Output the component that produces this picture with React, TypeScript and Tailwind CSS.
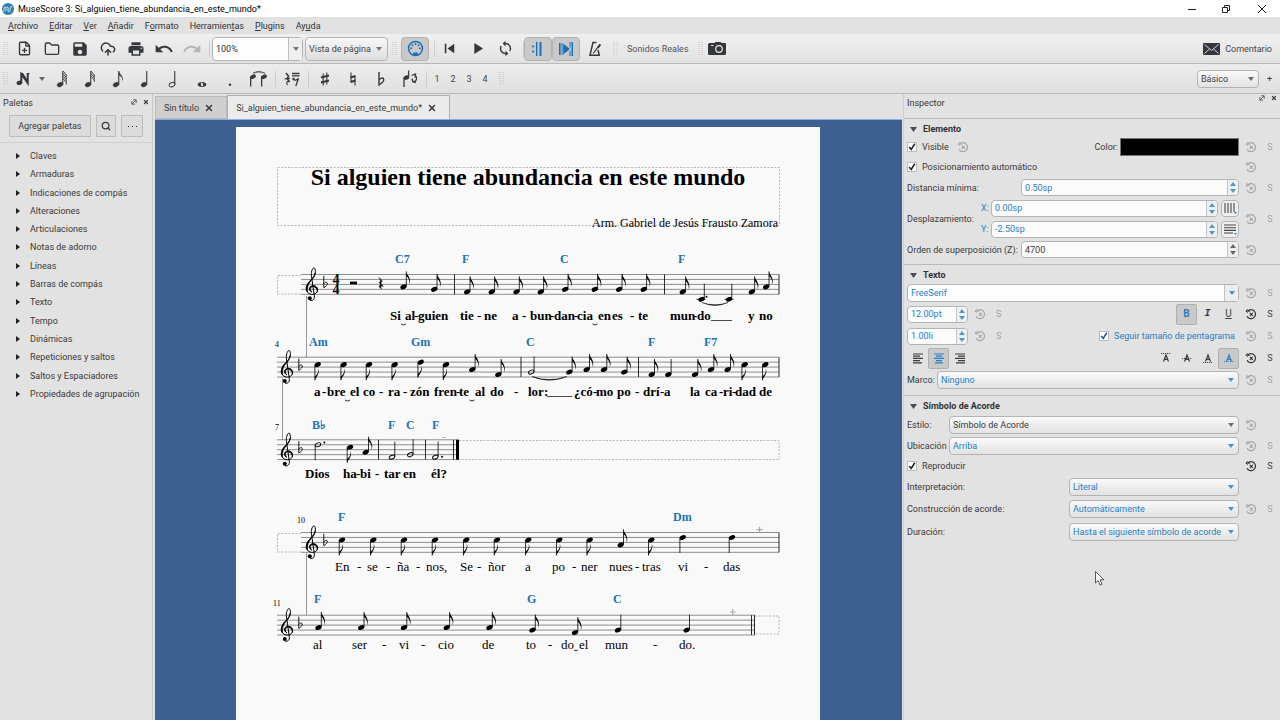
import React from "react";
import { MdLoop, MdPlayArrow, MdPrint, MdRedo, MdSave, MdSkipPrevious, MdUndo } from "react-icons/md";
import { CloudUpload, FilePlus, Folder, Search, X } from "lucide-react";

/* ---------- shared bits ---------- */

const Arrow = ({ className = "" }: { className?: string }) => (
  <svg viewBox="0 0 6 4" className={`h-1 w-1.5 shrink-0 ${className}`} fill="currentColor" aria-hidden="true">
    <path d="M0 0h6L3 4z" />
  </svg>
);

const Grip = () => (
  <svg viewBox="0 0 5 14" className="h-3.5 w-[5px] shrink-0 text-[#c2c2c2]" aria-hidden="true">
    <path d="M1 0v14M4 0v14" stroke="currentColor" strokeDasharray="1 1" />
  </svg>
);

const Sep = () => <span className="h-4 w-px shrink-0 bg-[#cdcdcd]" />;

function Tool({ label, on, className = "w-7", children }: { label: string; on?: boolean; className?: string; children: React.ReactNode }) {
  return (
    <button
      type="button"
      aria-label={label}
      className={`flex h-6 shrink-0 items-center justify-center rounded-sm ${on ? "border border-[#b2b2b2] bg-[#c9c9c9] text-[#1a70b8]" : "text-[#34373b]"} ${className}`}
    >
      {children}
    </button>
  );
}

function Select({ label, id, value, blue, editable, className = "" }: { label: string; id?: string; value: string; blue?: boolean; editable?: boolean; className?: string }) {
  return (
    <span className={`relative flex min-w-0 ${className}`}>
      <select
        id={id}
        aria-label={label}
        defaultValue={value}
        className={`h-[18px] w-full appearance-none rounded-sm border border-[#b4b4b4] pr-3 pl-[3px] leading-4 ${editable ? "bg-[#fdfdfd]" : "bg-linear-to-b from-[#fafafa] to-[#e2e2e2]"} ${blue ? "text-[#2480c4]" : "text-[#3a3a3a]"}`}
      >
        <option>{value}</option>
      </select>
      <span className={`pointer-events-none absolute inset-y-px right-px flex w-3.5 items-center justify-center ${editable ? "border-l border-[#c0c0c0] bg-[#eeeeee]" : ""}`}>
        <Arrow className={blue ? "text-[#3f93cf]" : "text-[#6b6b6b]"} />
      </span>
    </span>
  );
}

function Spin({ label, id, value, dark, className = "" }: { label: string; id?: string; value: string; dark?: boolean; className?: string }) {
  return (
    <span className={`flex h-[17px] min-w-0 overflow-hidden rounded-sm border border-[#b4b4b4] bg-[#fbfbfb] ${className}`}>
      <input id={id} aria-label={label} defaultValue={value} className={`w-full min-w-0 flex-1 pl-[3px] ${dark ? "text-[#3a3a3a]" : "text-[#2480c4]"}`} />
      <span className={`flex w-[11px] flex-col items-center justify-center border-l border-[#c4c4c4] bg-[#f0f0f0] ${dark ? "text-[#666]" : "text-[#4b98d0]"}`}>
        <button type="button" aria-label={`${label} +`} className="flex h-[7px] items-center">
          <Arrow className="rotate-180" />
        </button>
        <button type="button" aria-label={`${label} -`} className="flex h-[7px] items-center">
          <Arrow />
        </button>
      </span>
    </span>
  );
}

function Check({ label, blue }: { label: string; blue?: boolean }) {
  return (
    <label className={`flex items-center gap-[5px] ${blue ? "text-[#2480c4]" : ""}`}>
      <span className="relative flex size-2.5">
        <input type="checkbox" defaultChecked className="size-2.5 appearance-none border border-[#bdbdbd] bg-white" />
        <svg viewBox="0 0 10 10" className={`pointer-events-none absolute inset-0 ${blue ? "text-[#1a5f9c]" : "text-[#222]"}`} fill="none" stroke="currentColor" strokeWidth="1.6">
          <path d="M2.2 5l2 2.4L7.8 1.8" />
        </svg>
      </span>
      {label}
    </label>
  );
}

function Reset({ dark }: { dark?: boolean }) {
  return (
    <button type="button" aria-label="Restablecer" className={`flex justify-center ${dark ? "text-[#2e2e2e]" : "text-[#a3a3a3]"}`}>
      <svg viewBox="0 0 12 12" className="size-3" fill="none" stroke="currentColor" strokeWidth="1.1">
        <path d="M2.6 3.2A4.5 4.5 0 1 1 2 8.2" />
        <path d="M4.8 4.8l3 3M7.8 4.8l-3 3" />
        <path d="M1 3.2h4.2M2.6 1.2L1 3.2l1.6 1.6" strokeWidth="0.9" />
      </svg>
    </button>
  );
}

function SetStyle({ dark }: { dark?: boolean }) {
  return (
    <button type="button" aria-label="Fijar como estilo" className={`text-center ${dark ? "text-[#444]" : "text-[#a3a3a3]"}`}>
      S
    </button>
  );
}

type RowProps = { h?: string; reset?: boolean | "dark"; s?: boolean | "dark"; children: React.ReactNode };
function Row({ h = "h-[21px]", reset, s, children }: RowProps) {
  return (
    <div className={`grid grid-cols-[1fr_24px_14px] items-center pr-[3px] ${h}`}>
      <div className="flex min-w-0 items-center pl-[3px]">{children}</div>
      {reset ? <Reset dark={reset === "dark"} /> : <span />}
      {s ? <SetStyle dark={s === "dark"} /> : <span />}
    </div>
  );
}

const Section = ({ title, children }: { title: string; children: React.ReactNode }) => (
  <section className="border-t border-[#b9b9b9] pb-1">
    <h3 className="flex h-[18px] items-center gap-1.5 pt-0.5 pl-1.5 font-bold text-[#333]">
      <svg viewBox="0 0 7 5" className="h-[5px] w-[7px]" fill="#4a4a4a">
        <path d="M0 0h7L3.5 5z" />
      </svg>
      {title}
    </h3>
    {children}
  </section>
);

const DockButtons = () => (
  <span className="flex gap-1.5 pb-0.5 text-[#444]">
    <button type="button" aria-label="Desacoplar">
      <svg viewBox="0 0 6 6" className="size-1.5" fill="none" stroke="currentColor" strokeWidth="0.8">
        <path d="M2 .8h3.2V4M.8 2v3.2H4M5 1L1 5" />
      </svg>
    </button>
    <button type="button" aria-label="Cerrar panel">
      <X className="size-1.5" strokeWidth={5} />
    </button>
  </span>
);

/* ---------- toolbars ---------- */

function TitleBar() {
  return (
    <header className="flex h-[17px] items-center bg-white pl-0.5 text-black">
      <svg viewBox="0 0 12 12" className="mr-1 size-3">
        <circle cx="6" cy="6" r="6" fill="#2a7fb0" />
        <path d="M2 8.6V5.2c0-1.6 2-1.6 2 0v3M4 5.2c0-1.6 2.1-1.6 2.1 0v3.2c0 .8 2 .6 2-.6V4.4c0-1.3 2-1.1 1.9.1" fill="none" stroke="#dff0f8" strokeWidth="0.9" />
      </svg>
      <span>MuseScore 3: Si_alguien_tiene_abundancia_en_este_mundo*</span>
      <span className="ml-auto flex">
        <button type="button" aria-label="Minimizar" className="flex w-[35px] justify-center">
          <svg viewBox="0 0 8 8" className="size-2" stroke="#222"><path d="M0 4.5h8" /></svg>
        </button>
        <button type="button" aria-label="Restaurar" className="flex w-[34px] justify-center">
          <svg viewBox="0 0 8 8" className="size-2" fill="none" stroke="#222"><path d="M.5 2.5h5v5h-5zM2.5 2V.5h5v5H6" /></svg>
        </button>
        <button type="button" aria-label="Cerrar" className="flex w-[37px] justify-center">
          <svg viewBox="0 0 8 8" className="size-2" stroke="#222"><path d="M0 0l8 8M8 0L0 8" /></svg>
        </button>
      </span>
    </header>
  );
}

const menus: [string, string, string][] = [
  ["", "A", "rchivo"], ["", "E", "ditar"], ["", "V", "er"], ["", "A", "ñadir"], ["F", "o", "rmato"],
  ["Herramien", "t", "as"], ["", "P", "lugins"], ["Ay", "u", "da"],
];

const MenuBar = () => (
  <nav className="flex h-[17px] items-center gap-[11px] bg-[#e1e1e1] pl-2 text-[#333]">
    {menus.map(([a, b, c]) => (
      <button type="button" key={a + b + c}>
        {a}<u>{b}</u>{c}
      </button>
    ))}
  </nav>
);

function MainToolbar() {
  return (
    <div className="flex h-[30px] items-center border-b border-[#b8b8b8] bg-linear-to-b from-[#f0f0f0] to-[#e2e2e2] pl-[3px]">
      <Grip />
      <span className="w-0.5" />
      <Tool label="Nuevo"><FilePlus className="size-[15px]" strokeWidth={2.2} /></Tool>
      <Tool label="Abrir"><Folder className="size-4" strokeWidth={2} /></Tool>
      <Tool label="Guardar"><MdSave className="size-[18px]" /></Tool>
      <Tool label="Guardar en línea"><CloudUpload className="size-4" strokeWidth={2.2} /></Tool>
      <Tool label="Imprimir"><MdPrint className="size-[18px]" /></Tool>
      <Tool label="Deshacer"><MdUndo className="size-5" /></Tool>
      <Tool label="Rehacer"><MdRedo className="size-5 text-[#b5b5b5]" /></Tool>
      <span className="w-[3px]" />
      <Sep />
      <span className="relative ml-0.5 flex h-6 w-[91px]">
        <input aria-label="Zoom" defaultValue="100%" className="w-full rounded-sm border border-[#b4b4b4] bg-[#fdfdfd] pl-[3px] text-[#333]" />
        <button type="button" aria-label="Opciones de zoom" className="absolute inset-y-px right-px flex w-3.5 items-center justify-center border-l border-[#c0c0c0] bg-[#efefef]">
          <Arrow className="text-[#777]" />
        </button>
      </span>
      <span className="relative ml-0.5 flex h-6 w-[83px]">
        <select aria-label="Vista" className="w-full appearance-none rounded-sm border border-[#b4b4b4] bg-linear-to-b from-[#f8f8f8] to-[#dedede] pl-[3px] text-[#444]">
          <option>Vista de página</option>
        </select>
        <Arrow className="pointer-events-none absolute top-2.5 right-1.5 text-[#777]" />
      </span>
      <span className="w-1" />
      <Grip />
      <Tool label="Entrada MIDI" on className="ml-1 w-7">
        <svg viewBox="0 0 18 18" className="size-[17px]" fill="none" stroke="currentColor">
          <circle cx="9" cy="9" r="7.4" strokeWidth="1.6" />
          <g fill="currentColor" stroke="none">
            <circle cx="4.3" cy="8.7" r="1" /><circle cx="5.8" cy="5.6" r="1" /><circle cx="9" cy="4.3" r="1" />
            <circle cx="12.2" cy="5.6" r="1" /><circle cx="13.7" cy="8.7" r="1" />
            <path d="M6.5 13.2h5V16h-5z" />
          </g>
        </svg>
      </Tool>
      <span className="w-[5px]" />
      <Sep />
      <Tool label="Rebobinar"><MdSkipPrevious className="size-[19px]" /></Tool>
      <Tool label="Reproducir"><MdPlayArrow className="size-[19px]" /></Tool>
      <Tool label="Bucle"><MdLoop className="size-[17px]" /></Tool>
      <span className="w-1" />
      <Sep />
      <Tool label="Repeticiones" on>
        <svg viewBox="0 0 16 16" className="size-4" fill="currentColor">
          <circle cx="3.2" cy="5.5" r="1.1" /><circle cx="3.2" cy="10.5" r="1.1" />
          <path d="M6 1h1.4v14H6zM9.5 1h2v14h-2z" />
        </svg>
      </Tool>
      <Tool label="Desplazar partitura" on>
        <svg viewBox="0 0 16 16" className="size-4" fill="currentColor">
          <path d="M1 2h1.6v12H1zM3.6 2h.9v12h-.9zM5.2 2.5L12 8l-6.8 5.5zM11.5 1h1v5.5h-1zM11.5 10h1v5h-1zM13.5 1H15v14h-1.5z" />
        </svg>
      </Tool>
      <span className="w-px" />
      <Tool label="Metrónomo">
        <svg viewBox="0 0 16 16" className="size-4" fill="none" stroke="currentColor" strokeWidth="1.5">
          <path d="M9.5 1.6H6L3 14.2h9.2L11 9" />
          <path d="M6.2 12.5L13 3.4" strokeWidth="1.2" />
          <path d="M10 6.5l2.6-3.6 1.5 1-2.6 3.6z" fill="currentColor" stroke="none" />
        </svg>
      </Tool>
      <span className="w-1" />
      <Grip />
      <button type="button" className="mx-[9px] text-[#555]">Sonidos Reales</button>
      <Grip />
      <Tool label="Captura">
        <svg viewBox="0 0 18 13" className="h-[13px] w-[18px]">
          <path d="M1.5 1h5l1-1h5l1 1h3A1.3 1.3 0 0 1 18 2.3v9A1.5 1.5 0 0 1 16.500 13h-15A1.5 1.500 0 0 1 0 11.500v-9A1.500 1.500 0 0 1 1.500 1z" fill="currentColor" />
          <circle cx="11" cy="7" r="3.300" fill="none" stroke="#e8e8e8" strokeWidth="1.200" />
          <path d="M3 3.500h2.500" stroke="#e8e8e8" />
        </svg>
      </Tool>
      <button type="button" className="mr-2 ml-auto flex items-center gap-[5px] text-[#444]">
        <svg viewBox="0 0 17 12" className="h-3 w-[17px]">
          <rect width="17" height="12" rx="1" fill="#34373f" />
          <path d="M1.500 1.500L8.500 7.500l7-6M1.500 10.500L6.500 6M15.500 10.500L10.500 6" fill="none" stroke="#e4e4e4" strokeWidth="0.900" />
        </svg>
        Comentario
      </button>
    </div>
  );
}

function Quaver({ flags = 0, half }: { flags?: number; half?: boolean }) {
  return (
    <svg viewBox="0 0 14 18" className="h-[18px] w-3.5" fill="currentColor">
      <ellipse cx="5" cy="14.600" rx="3" ry="2.100" transform="rotate(-25 5 14.600)" fill={half ? "none" : "currentColor"} stroke="currentColor" strokeWidth={half ? 1 : 0.500} />
      <path d="M7.200 1h1.100v13.500H7.200z" />
      {flags === 1 && <path d="M8 1c.4 3.500 5.500 5 3.300 10.500C11.600 8 10 6.200 8 5.600z" />}
      {flags > 1 &&
        Array.from({ length: flags }, (_, i) => (
          <path key={i} transform={`translate(0 ${i * 2.500})`} d="M8 1.200c1 1.800 3.800 2.400 3.400 5.600" fill="none" stroke="currentColor" strokeWidth="1" />
        ))}
    </svg>
  );
}

function NoteToolbar() {
  return (
    <div className="flex h-[30px] items-center border-b border-[#b8b8b8] bg-linear-to-b from-[#ececec] to-[#e0e0e0] pl-[3px]">
      <Grip />
      <span className="w-0.5" />
      <Tool label="Entrada de notas">
        <svg viewBox="0 0 16 14" className="h-3.5 w-4">
          <ellipse cx="3.400" cy="10.800" rx="2.900" ry="2.200" fill="currentColor" transform="rotate(-15 3.400 10.800)" />
          <path d="M5.300 11V2l6.400 9V1" fill="none" stroke="currentColor" strokeWidth="2" />
          <path d="M4.500 1h2.500l5.500 8.500h-2zM11 1h2.800L12.700 3z" fill="currentColor" />
        </svg>
      </Tool>
      <Tool label="Modos de entrada" className="w-[7px]"><Arrow className="text-[#666]" /></Tool>
      <span className="w-[3px]" />
      <Tool label="Semifusa"><Quaver flags={4} /></Tool>
      <Tool label="Semicorchea"><Quaver flags={3} /></Tool>
      <Tool label="Corchea"><Quaver flags={1} /></Tool>
      <Tool label="Negra"><Quaver /></Tool>
      <Tool label="Blanca"><Quaver half /></Tool>
      <Tool label="Redonda">
        <svg viewBox="0 0 10 18" className="h-[18px] w-2.5">
          <path fillRule="evenodd" d="M5 12a4.300 2.500 0 1 0 .01 0zM4.600 12.600c1.300-.2 2.300 3.400.8 3.800-1.300.2-2.300-3.400-.8-3.800z" fill="currentColor" />
        </svg>
      </Tool>
      <Tool label="Puntillo">
        <svg viewBox="0 0 10 18" className="h-[18px] w-2.5"><circle cx="5" cy="14.800" r="1.200" fill="currentColor" /></svg>
      </Tool>
      <Tool label="Ligadura">
        <svg viewBox="0 0 20 18" className="h-[18px] w-5" fill="currentColor">
          <path d="M5 3.200Q10.500 -.4 17 3.200Q10.500 1 5 3.200z" stroke="currentColor" strokeWidth="0.500" />
          <path d="M2 6h1.300v10.500H2zM13 6h1.300v10.500H13z" />
          <ellipse cx="5" cy="6.700" rx="3" ry="2" transform="rotate(-25 5 6.700)" /><ellipse cx="16" cy="6.700" rx="3" ry="2" transform="rotate(-25 16 6.700)" />
        </svg>
      </Tool>
      <span className="w-[3px]" />
      <Sep />
      <span className="w-0.5" />
      <Tool label="Silencio">
        <svg viewBox="0 0 18 16" className="h-4 w-[18px]" fill="none" stroke="currentColor">
          <path d="M3 2l2.600 3.200L4 7.500l2.500 3.200" strokeWidth="1.500" />
          <path d="M6.500 10.700c-2.600-.9-3.600.6-2 3.300M1.500 8l5.500-.6" strokeWidth="1.100" />
          <path d="M9 2.500h7.500M9 4.800h7.500" strokeWidth="1.300" />
          <path d="M10.500 8.200c1 1.500 3 1 5-.8L12.800 15" strokeWidth="1.300" />
          <circle cx="10.500" cy="8" r="1.200" fill="currentColor" stroke="none" />
        </svg>
      </Tool>
      <span className="w-0.5" />
      <Sep />
      <span className="w-0.5" />
      <Tool label="Sostenido">
        <svg viewBox="0 0 10 16" className="h-4 w-2.5" stroke="currentColor"><path d="M3.200 2.500v12M6.800 1.500v12" strokeWidth="1.100" /><path d="M1 6.500l8-2M1 11.500l8-2" strokeWidth="2" /></svg>
      </Tool>
      <Tool label="Becuadro">
        <svg viewBox="0 0 10 16" className="h-4 w-2.5" stroke="currentColor"><path d="M3 1.500V11M7 5v9.500" strokeWidth="1.100" /><path d="M2.500 6.500l5-1.500M2.500 11l5-1.500" strokeWidth="2" /></svg>
      </Tool>
      <Tool label="Bemol">
        <svg viewBox="0 0 10 16" className="h-4 w-2.5" fill="none" stroke="currentColor"><path d="M3 1v13C6 12 8.500 9.500 7.500 7.800 6.500 6.300 4.500 7 3 9" strokeWidth="1.400" /></svg>
      </Tool>
      <Tool label="Invertir dirección" className="ml-px w-7">
        <svg viewBox="0 0 16 18" className="h-[18px] w-4" fill="none" stroke="currentColor" strokeWidth="1.300">
          <path d="M2 7.500v9.500M6.600 .5v7" />
          <ellipse cx="4.300" cy="7.600" rx="2.800" ry="2.100" fill="currentColor" stroke="none" transform="rotate(-20 4.300 7.600)" />
          <path d="M9.500 5.500l4-1.500-.5 3.500M13 5c3 3 1.500 7-2 6.500M10 8.500l.8 3.200 3 .8" />
        </svg>
      </Tool>
      <span className="w-0.5" />
      <Sep />
      <span className="w-0.5" />
      {[1, 2, 3, 4].map((n) => (
        <button type="button" key={n} className="w-4 text-center text-[#444]">{n}</button>
      ))}
      <span className="w-1.5" />
      <Grip />
      <Select label="Espacio de trabajo" value="Básico" className="ml-auto w-[62px]" />
      <button type="button" aria-label="Nuevo espacio" className="mr-2 ml-2">+</button>
    </div>
  );
}

/* ---------- palettes ---------- */

const palettes = [
  "Claves", "Armaduras", "Indicaciones de compás", "Alteraciones", "Articulaciones", "Notas de adorno", "Líneas",
  "Barras de compás", "Texto", "Tempo", "Dinámicas", "Repeticiones y saltos", "Saltos y Espaciadores", "Propiedades de agrupación",
];

function Palettes() {
  const btn = "flex h-[22px] items-center justify-center border border-[#bdbdbd] bg-[#dcdcdc]";
  return (
    <aside className="w-[153px] shrink-0 border-r border-[#c8c8c8]">
      <h2 className="flex h-[18px] items-center justify-between pr-[3px] pl-[3px]">
        Paletas
        <DockButtons />
      </h2>
      <div className="flex gap-[5px] border-b border-[#cfcfcf] px-[9px] pt-[3px] pb-[5px]">
        <button type="button" className={`${btn} w-[83px]`}>Agregar paletas</button>
        <button type="button" aria-label="Buscar" className={`${btn} w-[21px]`}><Search className="size-2.5" strokeWidth={3} /></button>
        <button type="button" aria-label="Más" className={`${btn} w-[22px] gap-[3px]`}>
          <i className="size-px bg-[#222]" /><i className="size-px bg-[#222]" /><i className="size-px bg-[#222]" />
        </button>
      </div>
      <ul className="flex h-[260px] flex-col justify-between pt-1">
        {palettes.map((p) => (
          <li key={p} className="flex h-[18px] items-center gap-2.5 pl-4">
            <svg viewBox="0 0 4 6" className="h-1.5 w-1" fill="#222"><path d="M0 0l4 3-4 3z" /></svg>
            {p}
          </li>
        ))}
      </ul>
    </aside>
  );
}

/* ---------- score ---------- */

/* Note kinds: e = eighth, q = quarter, h = half. Step 0 is the bottom staff line, counted in half spaces. */
type Note = { x: number; step: number; kind: "e" | "q" | "h"; down?: boolean };
type Staff = { top: number; x1: number; x2: number; clef: number; notes: Note[]; bars: number[] };

const up = (kind: Note["kind"], step: number, ...xs: number[]): Note[] => xs.map((x) => ({ x, step, kind }));
const down = (kind: Note["kind"], step: number, ...xs: number[]): Note[] => xs.map((x) => ({ x, step, kind, down: true }));

const staves: Staff[] = [
  {
    top: 274.5, x1: 301, x2: 779, clef: 312, bars: [454.5, 664.5, 779],
    notes: [
      ...up("e", 3, 403.500, 766.200), ...up("e", 2, 434.200, 565.200, 594.800, 619.200, 643.800),
      ...up("e", 1, 467.200, 491.800, 516.500, 540.800, 682.800, 751.800), ...up("q", -2, 701.500, 729),
    ],
  },
  {
    top: 357.2, x1: 277, x2: 779, clef: 287, bars: [521, 638.5, 779],
    notes: [
      ...down("e", 5, 317.700, 343.700, 369, 394.700, 446, 744.700, 765.300), ...down("e", 6, 420.700),
      ...up("e", 3, 472.300, 586.700, 604, 711, 727.700), ...up("e", 1, 498.300, 651.700, 695),
      ...up("e", 2, 569.300, 624.300), ...up("h", 2, 531.300), ...up("q", 1, 668.300),
    ],
  },
  {
    top: 439.8, x1: 277, x2: 459, clef: 287, bars: [378.5, 425.5, 453.5],
    notes: [
      ...down("h", 6, 318), ...down("e", 5, 350), ...up("e", 3, 365.700),
      ...up("h", 1, 392, 435.300), ...up("h", 2, 410.300),
    ],
  },
  {
    top: 532.5, x1: 301, x2: 779, clef: 312, bars: [779],
    notes: [
      ...down("e", 5, 342, 373.300, 404, 435, 466.300, 497, 528.300, 559.300, 589.700, 651.300),
      ...up("e", 3, 620.700), ...down("q", 6, 682.700, 732),
    ],
  },
  {
    top: 615.2, x1: 277, x2: 755, clef: 287, bars: [751.500, 754.500],
    notes: [
      ...up("e", 3, 318.500, 361.200, 404, 446.800, 489.500), ...up("e", 2, 532.500), ...up("e", 1, 575),
      ...up("q", 2, 618, 686.700),
    ],
  },
];

type Words = { y: number; bold?: boolean; items: [number, string][] };
const lyrics: Words[] = [
  { y: 320, bold: true, items: [[390, "Si"], [405, "al"], [414, "-"], [418, "guien"], [460, "tie"], [477, "-"], [484, "ne"], [512, "a"], [522, "-"], [530, "bun"], [550, "-"], [554, "dan"], [574, "-"], [577, "cia"], [598, "en"], [612, "es"], [630, "-"], [638, "te"], [670, "mun"], [693, "-"], [697, "do"], [748, "y"], [759, "no"]] },
  { y: 396, bold: true, items: [[314, "a"], [322, "-"], [327, "bre"], [350, "el"], [363, "co"], [379, "-"], [388, "ra"], [403, "-"], [410, "zón"], [434, "fren"], [456, "-"], [459, "te"], [475, "al"], [490, "do"], [514, "-"], [528, "lor:"], [574, "¿có"], [593, "-"], [596, "mo"], [617, "po"], [635, "-"], [643, "drí"], [660, "-"], [664, "a"], [690, "la"], [705, "ca"], [719, "-"], [723, "ri"], [732, "-"], [735, "dad"], [759, "de"]] },
  { y: 478, bold: true, items: [[305, "Dios"], [343, "ha"], [356, "-"], [360, "bi"], [375, "-"], [384, "tar"], [403, "en"], [431, "él?"]] },
  { y: 571, items: [[335, "En"], [357, "-"], [367, "se"], [386, "-"], [397, "ña"], [416, "-"], [426, "nos,"], [460, "Se"], [477, "-"], [488, "ñor"], [525, "a"], [552, "po"], [572, "-"], [581, "ner"], [609, "nues"], [635, "-"], [642, "tras"], [678, "vi"], [704, "-"], [723, "das"]] },
  { y: 649, items: [[313, "al"], [352, "ser"], [382, "-"], [399, "vi"], [421, "-"], [438, "cio"], [482, "de"], [526, "to"], [548, "-"], [561, "do"], [579, "el"], [605, "mun"], [653, "-"], [679, "do."]] },
];

const chords: Words[] = [
  { y: 263, items: [[395, "C7"], [462, "F"], [560, "C"], [678, "F"]] },
  { y: 346, items: [[309, "Am"], [411, "Gm"], [526, "C"], [648, "F"], [704, "F7"]] },
  { y: 429, items: [[312, "B♭"], [388, "F"], [406, "C"], [432, "F"]] },
  { y: 521, items: [[338, "F"], [673, "Dm"]] },
  { y: 603, items: [[314, "F"], [527, "G"], [613, "C"]] },
];

const barNumbers: [number, number, string][] = [[275, 347, "4"], [275, 430, "7"], [297, 523, "10"], [273, 606, "11"]];

const GAP = 4.95;

function NoteGlyph({ note, bottom }: { note: Note; bottom: number }) {
  const y = bottom - (note.step * GAP) / 2;
  const open = note.kind === "h";
  return (
    <g transform={`translate(${note.x} ${y})`}>
      <ellipse rx={open ? 2.9 : 3.3} ry={open ? 1.8 : 2.2} transform="rotate(-24)" fill={open ? "none" : "#000"} stroke="#000" strokeWidth={open ? 0.9 : 0} />
      {note.down ? <path d="M-2.8 0.500V15.500" stroke="#000" strokeWidth="0.800" /> : <path d="M2.8 -0.500V-15.500" stroke="#000" strokeWidth="0.800" />}
      {note.kind === "e" && !note.down && <path d="M2.800 -15.500C3.200 -11.800 8.600 -8.800 5.800 -2C6.600 -6.500 5 -9 2.800 -10.900z" />}
      {note.kind === "e" && note.down && <path d="M-2.800 16C-2.400 12.300 3 9.300 .4 3.500C1.200 7.800 -.6 9.800 -2.800 11.600z" />}
    </g>
  );
}

const Clef = ({ x, y }: { x: number; y: number }) => (
  <g transform={`translate(${x} ${y})`}>
    <path
      d="M-.4 2.600C-3.400 1 -3 -3.300 .9 -3.600C4.900 -3.800 6.400 .2 5 2.700C3.200 5.700 -1.600 5.900 -4.300 3.100C-7 0 -5.400 -4.600 -2.600 -7.800C0 -10.700 3.600 -13.700 3.400 -18.200C3.300 -20.200 2.600 -21.600 1.900 -21.600C.1 -21 -1.200 -16.500 -.5 -13L2.300 6.500C2.900 10.200 .4 11.800 -1.600 11.200"
      fill="none" stroke="#000" strokeWidth="1" strokeLinecap="round"
    />
    <path d="M-4.300 3.100C-7 0 -5.400 -4.600 -2.600 -7.800C-.2 -10.300 2.600 -12.600 3.300 -16.800C3 -12 -.4 -9.600 -2.300 -6.800C-4.600 -3.600 -4.800 .6 -4.300 3.100z" stroke="#000" strokeWidth="0.600" />
    <path d="M.9 -3.700C5.400 -4 6.600 .2 5 2.700C5.600 .4 4.200 -2.400 .9 -2.700C-1.600 -2.400 -2.300 0 -.4 2.600C-3.800 1 -2.800 -3.500 .9 -3.700z" stroke="#000" strokeWidth="0.400" />
    <circle cx="-2.200" cy="9" r="2" />
  </g>
);

const Flat = ({ x, y }: { x: number; y: number }) => (
  <path transform={`translate(${x} ${y})`} d="M-1.700 -8.500V3.300C.4 2 2.200 .2 1.800 -1.400C1.200 -2.800 -.8 -2 -1.700 -.6" fill="none" stroke="#000" strokeWidth="0.900" />
);

function StaffView({ staff }: { staff: Staff }) {
  const bottom = staff.top + 4 * GAP;
  return (
    <g>
      {[0, 1, 2, 3, 4].map((i) => (
        <path key={i} d={`M${staff.x1} ${staff.top + i * GAP}H${staff.x2}`} stroke="#444" strokeWidth="0.600" />
      ))}
      {staff.bars.map((x) => (
        <path key={x} d={`M${x} ${staff.top}V${bottom}`} stroke="#111" strokeWidth="0.900" />
      ))}
      <Clef x={staff.clef} y={bottom - GAP} />
      <Flat x={staff.clef + 13.500} y={staff.top + 2 * GAP} />
      {staff.notes.map((n) => (
        <NoteGlyph key={n.x} note={n} bottom={bottom} />
      ))}
    </g>
  );
}

function Score() {
  return (
    <svg viewBox="236 127 584 593" className="h-[593px] w-[584px] shrink-0 bg-[#f9f9f9] [font-family:'Liberation_Serif',serif]" role="img" aria-label="Partitura">
      <g fill="none" stroke="#b5b5b5" strokeDasharray="2 1.500">
        <path d="M277.500 167.500h502v58h-502z" />
        <path d="M301 275.500h-23.500v18.500h23.500M459 440.500h320v19H459M301 533.500h-23.500v18.500h23.500M755 616h24v18h-24" />
      </g>
      <path d="M306.500 296V357M282.500 378V440M306.500 553V615" stroke="#999" fill="none" />

      <text x="528" y="185" textAnchor="middle" className="text-2xl font-bold">Si alguien tiene abundancia en este mundo</text>
      <text x="778" y="227" textAnchor="end" className="text-xs">Arm. Gabriel de Jesús Frausto Zamora</text>

      {staves.map((s) => (
        <StaffView key={s.top} staff={s} />
      ))}

      {/* time signature and rests of the opening bar */}
      <g className="text-[14px] font-bold" textAnchor="middle">
        <text x="336" y="284">4</text>
        <text x="336" y="294">4</text>
      </g>
      <path d="M350 281.600h7v2.700h-7z" />
      <path d="M379 277.500l3.300 3.600c-2 1.700-1.600 2.300 1 5.300-2.600-1-3.400.3-1.600 2.500-3.400-1.800-2.800-4.200-.4-3.600l-2.200-2.800c2-1.600 1.800-2.300-.1-5z" stroke="#000" strokeWidth="0.500" />

      {/* ties, ledger lines and augmentation dots */}
      <path d="M696.500 299.300h9M724.500 299.300h9" stroke="#000" strokeWidth="0.800" />
      <g stroke="#000" strokeWidth="0.400">
        <path d="M702 302.500Q715 308.500 728 302.500Q715 307 702 302.500z" />
        <path d="M532 376.500Q549 384 567 376.500Q549 382.500 532 376.500z" />
      </g>
      <g>
        <circle cx="706.500" cy="296.800" r="1" />
        <circle cx="324.300" cy="442.500" r="1" />
        <circle cx="442" cy="456.800" r="1" />
      </g>
      <path d="M456 439.800h3v19.800h-3z" />
      <path d="M711 320.500h21M547 396.500h25" stroke="#000" strokeWidth="0.700" />
      <path d="M401 324q2.500 2 5 0M592.500 324q2.500 2 5 0M345 400q2.500 2 5 0M469.500 400q2.500 2 5 0M574 650q2 1.600 4 0" fill="none" stroke="#000" strokeWidth="0.800" />
      <path d="M756.500 529.700h6M759.500 526.700v6M729.700 612h6M732.700 609v6M442.500 437.500h3" stroke="#aaa" strokeWidth="1.200" />

      {lyrics.map((row) => (
        <g key={row.y} className={row.bold ? "text-[13px] font-bold" : "text-[13px]"}>
          {row.items.map(([x, t]) => (
            <text key={x} x={x} y={row.y}>{t}</text>
          ))}
        </g>
      ))}
      {chords.map((row) => (
        <g key={row.y} className="text-xs font-bold" fill="#1b72b5">
          {row.items.map(([x, t]) => (
            <text key={x} x={x} y={row.y}>{t}</text>
          ))}
        </g>
      ))}
      {barNumbers.map(([x, y, t]) => (
        <text key={t} x={x} y={y} className="text-[8px]">{t}</text>
      ))}
    </svg>
  );
}

function Workspace() {
  return (
    <main className="ml-0.5 mr-px flex min-w-0 flex-1 flex-col overflow-hidden">
      <div className="flex h-[26px] shrink-0 items-end border-b border-[#8faed6]" role="tablist">
        <button type="button" role="tab" className="flex h-[23px] items-center gap-[5px] border border-[#b9b9b9] bg-[#cfcfcf] pr-3 pl-2">
          Sin título <X className="size-2.5" strokeWidth={3.500} />
        </button>
        <button type="button" role="tab" aria-selected="true" className="flex h-6 items-center gap-[5px] border border-b-0 border-[#b0b0b0] bg-[#ebebeb] pr-3 pl-2">
          Si_alguien_tiene_abundancia_en_este_mundo* <X className="size-2.5" strokeWidth={3.500} />
        </button>
      </div>
      <div className="flex min-h-0 flex-1 justify-center overflow-hidden bg-[#3d6091] pt-[7px] pr-px">
        <Score />
      </div>
    </main>
  );
}

/* ---------- inspector ---------- */

function FormatButton({ label, on, children }: { label: string; on?: boolean; children: React.ReactNode }) {
  return (
    <button type="button" aria-label={label} className={`flex h-[21px] w-[21px] items-center justify-center ${on ? "rounded-xs border border-[#b0b0b0] bg-[#c9c9c9] text-[#2480c4]" : "text-[#3c3c3c]"}`}>
      {children}
    </button>
  );
}

const AlignIcon = ({ d }: { d: string }) => (
  <svg viewBox="0 0 10 11" className="h-[11px] w-2.5" stroke="currentColor" strokeWidth="1.200"><path d={d} /></svg>
);

const VAlign = ({ line }: { line: string }) => (
  <svg viewBox="0 0 12 12" className="size-3" fill="none" stroke="currentColor">
    <path d="M3.500 9.500L6 3l2.500 6.500M4.300 7.300h3.400" strokeWidth="1.200" />
    <path d={line} strokeWidth="0.900" strokeDasharray="1.200 0.800" />
  </svg>
);

function StepButton({ label, d }: { label: string; d: string }) {
  return (
    <button type="button" aria-label={label} className="ml-[3px] flex h-[17px] w-[18px] items-center justify-center rounded-sm border border-[#b4b4b4] bg-[#f0f0f0]">
      <svg viewBox="0 0 14 12" className="h-3 w-3.5" stroke="#444" strokeWidth="1.100"><path d={d} /><path d="M11 10h3l-1.500 2z" fill="#2480c4" stroke="none" /></svg>
    </button>
  );
}

function Inspector() {
  return (
    <aside className="w-[377px] shrink-0 border-l border-[#d0d0d0]">
      <h2 className="flex h-6 items-start justify-between pt-px pr-[3px] pl-[3px]">
        Inspector
        <DockButtons />
      </h2>
      <Section title="Elemento">
        <Row h="h-5" reset s>
          <Check label="Visible" />
          <span className="ml-2 flex"><Reset /></span>
          <span className="mr-0.5 ml-auto">Color:</span>
          <button type="button" aria-label="Color" className="h-[18px] w-[119px] border border-[#777] bg-black" />
        </Row>
        <Row h="h-5" reset><Check label="Posicionamiento automático" /></Row>
        <Row reset s>
          <label htmlFor="dist" className="w-[114px]">Distancia mínima:</label>
          <Spin id="dist" label="Distancia mínima" value="0.50sp" className="flex-1" />
        </Row>
        <Row h="h-[41px]" reset s>
          <span className="w-[74px]">Desplazamiento:</span>
          <span className="flex flex-1 flex-col gap-1 text-[#2480c4]">
            <span className="flex items-center">
              <label htmlFor="dx" className="w-2.5">X:</label>
              <Spin id="dx" label="X" value="0.00sp" className="flex-1" />
              <StepButton label="Ajuste horizontal" d="M2 1v10M5 1v10M8 1v10M11 1v9" />
            </span>
            <span className="flex items-center">
              <label htmlFor="dy" className="w-2.5">Y:</label>
              <Spin id="dy" label="Y" value="-2.50sp" className="flex-1" />
              <StepButton label="Ajuste vertical" d="M1 2h12M1 4.700h12M1 7.400h12M1 10h9" />
            </span>
          </span>
        </Row>
        <Row reset>
          <label htmlFor="z" className="w-[114px] whitespace-nowrap">Orden de superposición (Z):</label>
          <Spin id="z" label="Orden de superposición" value="4700" dark className="flex-1" />
        </Row>
      </Section>

      <Section title="Texto">
        <Row h="h-5" reset s><Select label="Tipo de letra" value="FreeSerif" blue editable className="flex-1" /></Row>
        <Row h="h-[22px]" reset="dark" s="dark">
          <Spin label="Tamaño" value="12.00pt" className="w-[61px]" />
          <span className="mr-2.5 ml-1.5 flex"><Reset /></span>
          <SetStyle />
          <span className="ml-auto flex">
            <FormatButton label="Negrita" on><b className="text-[10px]">B</b></FormatButton>
            <FormatButton label="Cursiva"><b className="font-mono text-[10px] italic">I</b></FormatButton>
            <FormatButton label="Subrayado"><span className="text-[10px] underline">U</span></FormatButton>
          </span>
        </Row>
        <Row h="h-[22px]" reset s>
          <Spin label="Interlineado" value="1.00li" className="w-[61px]" />
          <span className="mr-2.5 ml-1.5 flex"><Reset /></span>
          <SetStyle />
          <span className="mr-1 ml-auto"><Check label="Seguir tamaño de pentagrama" blue /></span>
        </Row>
        <Row h="h-[22px]" reset="dark" s="dark">
          <FormatButton label="Izquierda"><AlignIcon d="M0 1h10M0 3.200h7M0 5.400h10M0 7.600h7M0 9.800h9" /></FormatButton>
          <FormatButton label="Centro" on><AlignIcon d="M0 1h10M2 3.200h6M0 5.400h10M2 7.600h6M1 9.800h8" /></FormatButton>
          <FormatButton label="Derecha"><AlignIcon d="M0 1h10M3 3.200h7M0 5.400h10M3 7.600h7M1 9.800h9" /></FormatButton>
          <span className="ml-auto flex">
            <FormatButton label="Arriba"><VAlign line="M1 1.500h10" /></FormatButton>
            <FormatButton label="Medio"><VAlign line="M1 6.500h10" /></FormatButton>
            <FormatButton label="Abajo"><VAlign line="M1 10.500h10" /></FormatButton>
            <FormatButton label="Línea base" on><VAlign line="M1 9.500h10" /></FormatButton>
          </span>
        </Row>
        <Row h="h-[22px]" reset s>
          <label htmlFor="frame" className="w-[30px]">Marco:</label>
          <Select id="frame" label="Marco" value="Ninguno" blue className="flex-1" />
        </Row>
      </Section>

      <Section title="Símbolo de Acorde">
        <Row reset>
          <label htmlFor="style" className="w-[42px]">Estilo:</label>
          <Select id="style" label="Estilo" value="Símbolo de Acorde" className="flex-1" />
        </Row>
        <Row reset s>
          <label htmlFor="place" className="w-[42px]">Ubicación</label>
          <Select id="place" label="Ubicación" value="Arriba" blue className="flex-1" />
        </Row>
        <Row h="h-5" reset="dark" s="dark"><Check label="Reproducir" /></Row>
        <Row>
          <label htmlFor="interp" className="flex-1">Interpretación:</label>
          <Select id="interp" label="Interpretación" value="Literal" blue className="w-[170px]" />
        </Row>
        <Row h="h-[23px]" reset s>
          <label htmlFor="voicing" className="flex-1">Construcción de acorde:</label>
          <Select id="voicing" label="Construcción de acorde" value="Automáticamente" blue className="w-[170px]" />
        </Row>
        <Row h="h-[23px]">
          <label htmlFor="dur" className="flex-1">Duración:</label>
          <Select id="dur" label="Duración" value="Hasta el siguiente símbolo de acorde" blue className="w-[170px]" />
        </Row>
      </Section>
    </aside>
  );
}

const Pointer = () => (
  <svg viewBox="0 0 10 15" className="pointer-events-none absolute top-[571px] left-[1095px] h-[15px] w-2.5">
    <path d="M.5.5v11.500l2.700-2.500 1.800 4.500 2-.8-1.900-4.400h3.800z" fill="#fff" stroke="#333" strokeWidth="0.800" />
  </svg>
);

export default function App() {
  return (
    <div className="relative flex h-screen flex-col overflow-hidden bg-[#e2e2e2] text-[9px] leading-4 text-[#3a3a3a] [font-family:Roboto,sans-serif]">
      <TitleBar />
      <MenuBar />
      <MainToolbar />
      <NoteToolbar />
      <div className="flex min-h-0 flex-1">
        <Palettes />
        <Workspace />
        <Inspector />
      </div>
      <Pointer />
    </div>
  );
}
